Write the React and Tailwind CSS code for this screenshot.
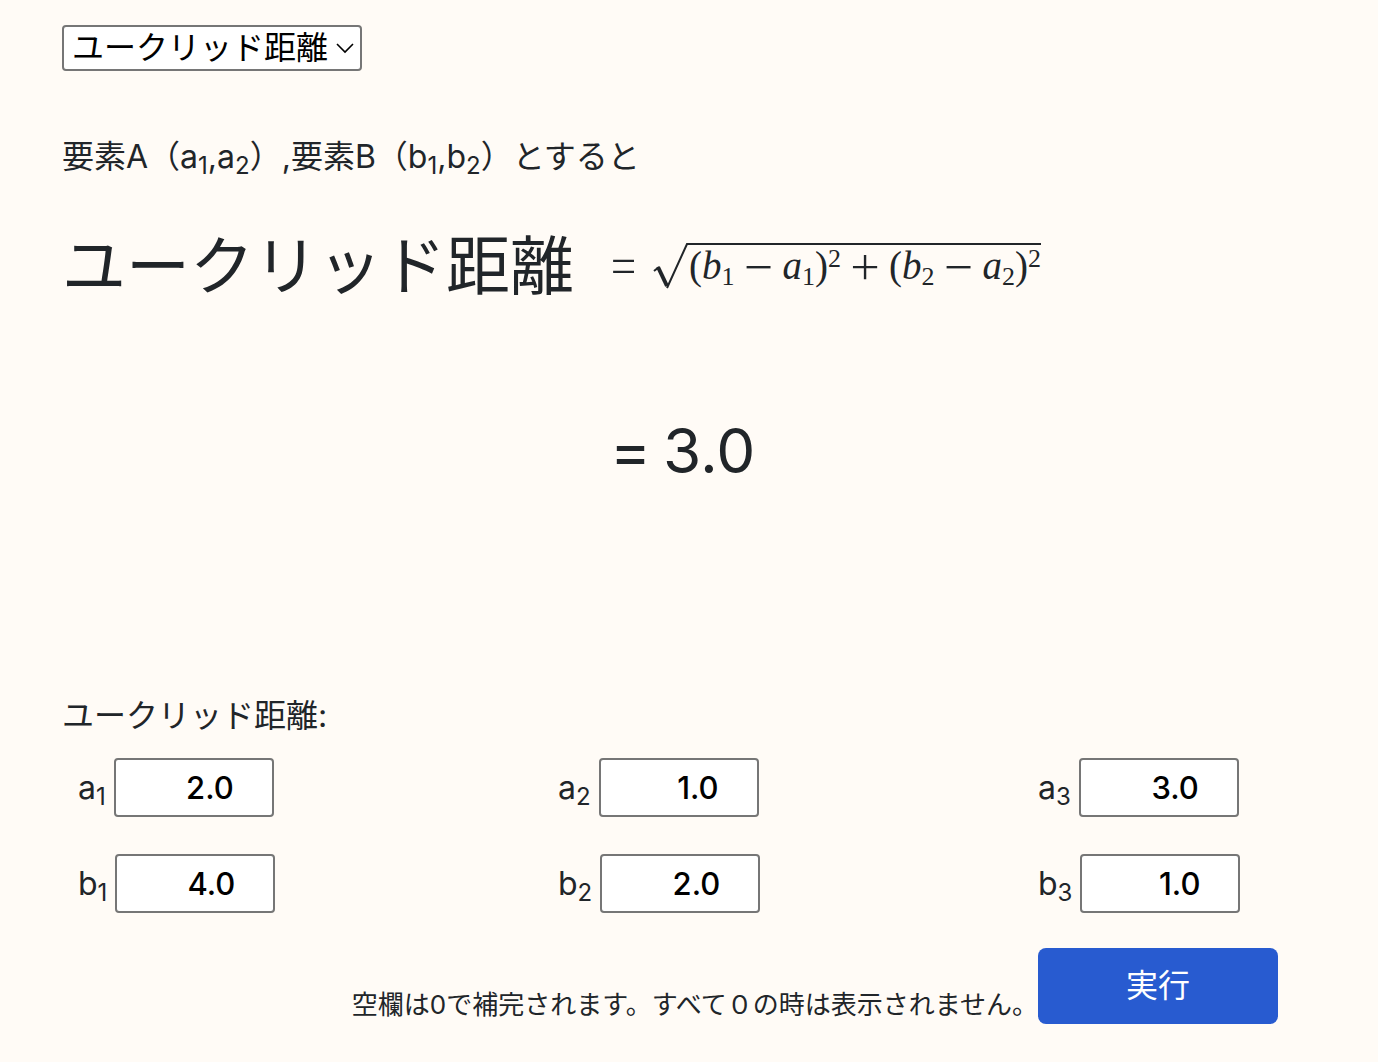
const ui = "font-['Inter','Noto_Sans_CJK_JP',sans-serif]";

function Sub({ children }) {
  return <sub className="text-[24px]">{children}</sub>;
}

function Field({ name, index, value }) {
  const id = name + index;
  return (
    <div className="flex items-center px-4">
      <label htmlFor={id} className="whitespace-nowrap pr-2">
        {name}
        <Sub>{index}</Sub>
      </label>
      <input
        id={id}
        type="text"
        defaultValue={value}
        className="h-[59px] w-40 rounded-[4px] border-2 border-[#767676] bg-white pr-[38px] text-right text-[31px] font-medium text-black"
      />
    </div>
  );
}

function Low({ children }) {
  return <sub className="text-[26px]">{children}</sub>;
}

function High({ children }) {
  return <sup className="-top-3 text-[26px]">{children}</sup>;
}

function Op({ children }) {
  return <span className="pb-2 font-['Inter',sans-serif] text-[56px] leading-none font-extralight">{children}</span>;
}

function Formula() {
  return (
    <div className="flex items-center whitespace-nowrap font-['Liberation_Serif',serif] text-[39px] leading-none">
      <span className="flex w-[43px] justify-center pr-4"><Op>=</Op></span>
      <svg width="36" height="46" viewBox="0 0 36 46" fill="none" stroke="currentColor" aria-hidden="true">
        <path d="M1 28L6 24" strokeWidth="2" />
        <path d="M5 24L14 43" strokeWidth="4" />
        <path d="M14 45L34 1H36" strokeWidth="2" />
      </svg>
      <div className="flex h-[46px] w-[352px] items-center justify-between border-t-2 border-current">
        <span className="pb-1">(<i>b</i><Low>1</Low></span>
        <Op>−</Op>
        <span className="pb-1"><i>a</i><Low>1</Low>)<High>2</High></span>
        <Op>+</Op>
        <span className="pb-1">(<i>b</i><Low>2</Low></span>
        <Op>−</Op>
        <span className="pb-1"><i>a</i><Low>2</Low>)<High>2</High></span>
      </div>
    </div>
  );
}

export default function App() {
  return (
    <main className={"min-h-screen bg-[#fffbf6] px-[62px] pt-[25px] text-[32px] leading-[48px] text-[#212529] " + ui}>
      <div className="relative w-[300px]">
        <select
          aria-label="距離"
          className="block h-[46px] w-full appearance-none rounded-[4px] border-2 border-[#767676] bg-white pl-2 leading-[40px] text-black"
        >
          <option>ユークリッド距離</option>
        </select>
        <svg className="pointer-events-none absolute top-4 right-2" width="18" height="14" viewBox="0 0 18 14" fill="none" stroke="black" strokeWidth="1.6" aria-hidden="true">
          <path d="M1 3L9 11L17 3" />
        </svg>
      </div>
      <p className="mt-[62px] whitespace-nowrap">
        要素A（a<Sub>1</Sub>,a<Sub>2</Sub>）,要素B（b<Sub>1</Sub>,b<Sub>2</Sub>）とすると
      </p>
      <div className="mt-[37px] grid grid-cols-[548px_1fr]">
        <h1 className="text-[64px] leading-[96px]">ユークリッド距離</h1>
        <Formula />
        <p className="col-start-2 mt-[89px] flex gap-3 text-[62px] leading-[96px]">
          <span>=</span>
          <span>3.0</span>
        </p>
      </div>
      <section className="mt-[193px]">
        <h2>ユークリッド距離:</h2>
        <div className="mt-[18px] grid grid-cols-[480px_480px_1fr] gap-y-[37px]">
          <Field name="a" index="1" value="2.0" />
          <Field name="a" index="2" value="1.0" />
          <Field name="a" index="3" value="3.0" />
          <Field name="b" index="1" value="4.0" />
          <Field name="b" index="2" value="2.0" />
          <Field name="b" index="3" value="1.0" />
        </div>
        <div className="mt-[35px] flex items-end justify-end pr-[38px]">
          <p className="whitespace-nowrap text-[26px] leading-[38px]">空欄は0で補完されます。すべて０の時は表示されません。</p>
          <button type="button" className="h-[76px] w-60 rounded-lg bg-[#285bd0] text-white">実行</button>
        </div>
      </section>
    </main>
  );
}
